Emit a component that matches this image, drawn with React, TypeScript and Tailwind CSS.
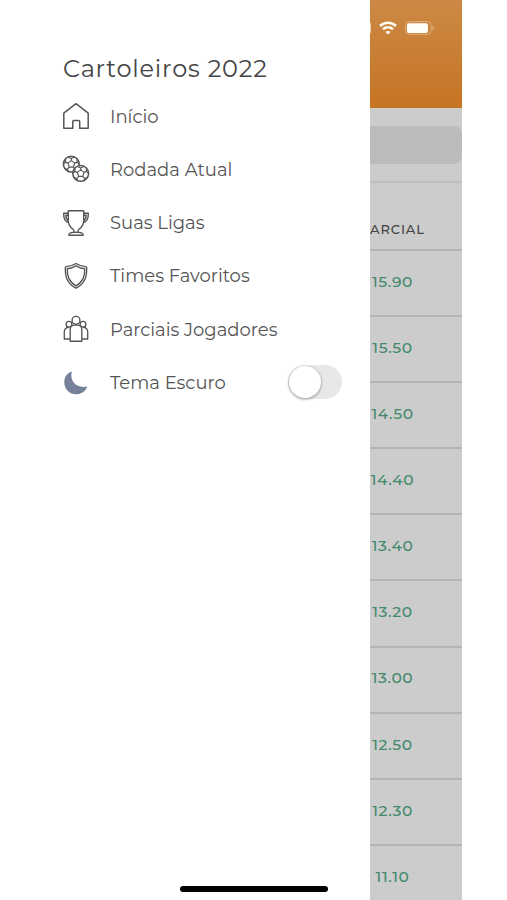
import React from 'react';

const HomeIcon = () => (
  <svg viewBox="0 0 28 28" className="w-7 h-7" fill="none" stroke="#555" strokeWidth="1.5" strokeLinejoin="round">
    <path d="M1.8 11.2 14 1.7l12.2 9.5v15h-8.5v-6.7a1 1 0 0 0-1-1h-4.9a1 1 0 0 0-1 1v6.7h-9z" />
  </svg>
);

const Ball = ({ x, y }: { x: number; y: number }) => (
  <g transform={`translate(${x} ${y})`}>
    <circle r="7.9" fill="#fff" strokeWidth="1.5" />
    <path d="M0-3.5 3.4-1 2.1 3h-4.2L-3.4-1z" />
    <path d="M0-3.5v-2M3.4-1l2.5-1M2.1 3l1.7 2.3M-2.1 3l-1.7 2.3M-3.4-1l-2.5-1M-3.2-7 0-5.5 3.2-7M5.6-5.2l.3 3.2 1.8 2M7 3.8l-3.2 1.5L3.2 7.4M-5.6-5.2l-.3 3.2-1.8 2M-7 3.8l3.2 1.5.6 2.1" />
  </g>
);

const BallsIcon = () => (
  <svg viewBox="0 0 28 28" className="w-7 h-7" fill="none" stroke="#555" strokeWidth="1.15" strokeLinejoin="round">
    <Ball x={9.3} y={9.1} />
    <Ball x={18.7} y={18.4} />
  </svg>
);

const TrophyIcon = () => (
  <svg viewBox="0 0 28 28" className="w-7 h-7" fill="none" stroke="#555" strokeWidth="1.4" strokeLinejoin="round">
    <path d="M6.3 1.8h15.4v10c0 4.4-2.3 6.7-4.7 8.5-1.2.9-1.4 1.900-.8 3l3.300.6c1.100.3 1.700 1.100 1.700 2.400H6.800c0-1.300.6-2.100 1.700-2.400l3.300-.6c.6-1.100.4-2.100-.8-3-2.400-1.800-4.700-4.100-4.700-8.500z" />
    <path d="M6.3 4.3H1.7c-.1 4.300.6 8.200 4.700 9.300M21.700 4.300h4.600c.1 4.300-.6 8.200-4.700 9.300M6.200 6.300H3.900c0 2.300.5 4.300 2.300 5.200M21.800 6.300h2.300c0 2.300-.5 4.300-2.300 5.200" />
    <path d="M11.7 23.3h4.6" />
  </svg>
);

const ShieldIcon = () => (
  <svg viewBox="0 0 28 28" className="w-7 h-7" fill="none" stroke="#555" strokeWidth="1.35" strokeLinejoin="round">
    <path d="M14 1.500c3.200 2.100 6.700 3.200 10.600 3.300.2 4.500.2 8.500-1.600 12.400-1.900 4-5 7-9 8.900-4-1.900-7.100-4.900-9-8.900-1.800-3.900-1.800-7.900-1.600-12.400C7.300 4.700 10.800 3.600 14 1.500z" />
    <path d="M14 3.900c2.700 1.600 5.600 2.600 8.700 2.800.1 3.500 0 6.600-1.500 9.700-1.600 3.300-4 5.700-7.200 7.400-3.200-1.700-5.600-4.100-7.200-7.400-1.500-3.100-1.600-6.200-1.500-9.700 3.100-.2 6-1.200 8.700-2.800z" />
  </svg>
);

const PlayersIcon = () => (
  <svg viewBox="0 0 28 28" className="w-7 h-7" fill="none" stroke="#555" strokeWidth="1.35" strokeLinejoin="round">
    <circle cx="7" cy="9.2" r="2.9" />
    <circle cx="21" cy="9.2" r="2.9" />
    <path d="M8.3 24h-6v-7.300c0-2.700 1.900-4.500 4.700-4.500M19.700 24h6v-7.300c0-2.700-1.900-4.500-4.700-4.500" />
    <circle cx="14" cy="5.3" r="3.9" fill="#fff" />
    <path d="M8.2 26.200V14.300c0-2.600 2-4.200 4.500-4.200h2.600c2.500 0 4.500 1.600 4.500 4.200v11.900z" fill="#fff" />
  </svg>
);

const MoonIcon = () => (
  <svg viewBox="0 0 28 28" className="w-7 h-7" fill="#75819b">
    <path d="M9.900 2.600C4.800 4.300 2.300 8.400 2.300 13.200c0 6.700 5 12.100 11.900 12.100 5.200 0 9.500-3.100 11-7.800-8.900 2.300-18.300-3.700-15.300-14.900z" />
  </svg>
);

const menuItems: Array<{ icon: React.ComponentType; label: string }> = [
  { icon: HomeIcon, label: 'Início' },
  { icon: BallsIcon, label: 'Rodada Atual' },
  { icon: TrophyIcon, label: 'Suas Ligas' },
  { icon: ShieldIcon, label: 'Times Favoritos' },
  { icon: PlayersIcon, label: 'Parciais Jogadores' },
  { icon: MoonIcon, label: 'Tema Escuro' }
];

const scores = ['15.90', '15.50', '14.50', '14.40', '13.40', '13.20', '13.00', '12.50', '12.30', '11.10'];

const StatusIcons = () => (
  <div className="flex items-center pt-[21px]">
    <span className="w-px h-2.5 bg-[#ecd0ae]" />
    <svg viewBox="0 0 18 14" className="ml-2 w-[18px] h-3.5" fill="none" stroke="#fffaf0" strokeWidth="2.5">
      <path d="M1 5c4.500-4.400 11.500-4.400 16 0M3.900 8.300c2.900-2.800 7.300-2.800 10.200 0" />
      <path d="M6.400 10.900c1.500-1.300 3.700-1.300 5.200 0L9 13.500z" fill="#fffaf0" stroke="none" />
    </svg>
    <svg viewBox="0 0 30 14" className="ml-2 w-[30px] h-3.5">
      <rect x="0.6" y="0.7" width="25.5" height="12.6" rx="3.8" fill="none" stroke="#e0b180" />
      <rect x="2" y="2.2" width="21" height="9.8" rx="2" fill="#fffdf8" />
      <path d="M27.300 5v4c1-.4 1.500-1.100 1.500-2s-.5-1.600-1.500-2z" fill="#e0b180" />
    </svg>
  </div>
);

const App: React.FC = () => {
  return (
    <div className="relative flex w-[507px] h-[900px] overflow-hidden bg-white font-['Montserrat','Inter',sans-serif]">
      {/* Drawer */}
      <aside className="w-[370px] shrink-0 pl-[62px] pt-[51px]">
        <h1 className="h-[38.4px] pl-px text-[24px] leading-9 tracking-[0.8px] text-[#444] whitespace-nowrap">Cartoleiros 2022</h1>
        <nav>
          <ul>
            {menuItems.map((item) => (
              <li key={item.label} className="flex items-center h-[53.3px]">
                <item.icon />
                <span className="ml-5 pt-0.5 text-[18px] text-[#555] whitespace-nowrap">{item.label}</span>
                {item.label === 'Tema Escuro' && (
                  <button className="ml-auto mr-7 mb-px flex items-center w-[54px] h-[34px] rounded-full bg-[#e7e7e7] p-px">
                    <span className="w-8 h-8 rounded-full bg-white shadow-[0_1px_2px_1px_rgba(0,0,0,0.22)]" />
                  </button>
                )}
              </li>
            ))}
          </ul>
        </nav>
      </aside>

      {/* Dimmed page behind the drawer */}
      <main className="w-[92px] h-[900px] shrink-0 overflow-hidden bg-[#ccc]">
        <header className="h-[108px] bg-linear-to-b from-[#cc8945] to-[#c57422]">
          <StatusIcons />
        </header>
        <div className="h-[75px] pt-[18px] border-b-2 border-[#bfbfbf]">
          <div className="h-[38px] rounded-r-lg bg-[#bcbcbc]" />
        </div>
        <div className="h-[68px] pt-[36px] border-b-2 border-[#b5b5b5] text-[13px] leading-5 font-medium tracking-[0.9px] text-[#444] whitespace-nowrap">
          ARCIAL
        </div>
        {scores.map((score) => (
          <div
            key={score}
            className="flex h-[66.1px] items-center border-b-2 border-[#b5b5b5] pb-[3px] text-[15.5px] font-medium tracking-[0.6px] text-[#438a6c]"
          >
            <span className="w-[45px] text-center">{score}</span>
          </div>
        ))}
      </main>

      {/* Home indicator */}
      <div className="absolute left-[180px] top-[886px] w-[148px] h-[6px] rounded-full bg-black" />
    </div>
  );
};

export default App;
